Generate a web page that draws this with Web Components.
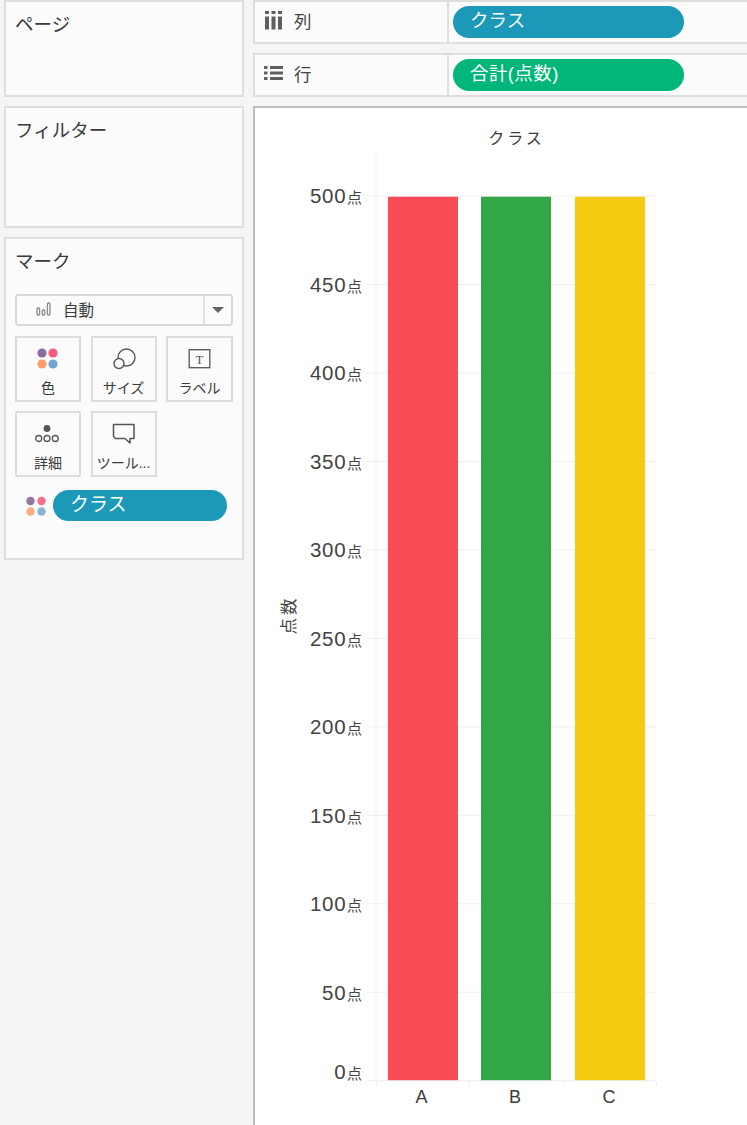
<!DOCTYPE html>
<html lang="ja">
<head>
<meta charset="utf-8">
<title>Tableau</title>
<style>
html,body{margin:0;padding:0;height:100%;overflow:hidden}
body{background:#f5f5f5;font-family:"Liberation Sans","Noto Sans CJK JP",sans-serif;color:#333}
</style>
</head>
<body>
<tab-workspace>
  <div slot="left">
    <side-panel label="ページ" h="97"></side-panel>
    <side-panel label="フィルター" h="122"></side-panel>
    <side-panel label="マーク" h="323">
      <mark-select>自動</mark-select>
      <mark-grid>
        <mark-button label="色"><svg width="24" height="24" viewBox="0 0 24 24"><circle cx="6" cy="6" r="4.6" fill="#8a6d9f"/><circle cx="17" cy="6" r="4.6" fill="#f8597c"/><circle cx="6" cy="17" r="4.6" fill="#fb9e6a"/><circle cx="17" cy="17" r="4.6" fill="#76a4d2"/></svg></mark-button>
        <mark-button label="サイズ"><svg width="24" height="24" viewBox="0 0 24 24" fill="none" stroke="#555" stroke-width="1.4"><circle cx="14.5" cy="10.5" r="8.5"/><circle cx="7" cy="16.5" r="5" fill="#fbfbfb"/></svg></mark-button>
        <mark-button label="ラベル"><svg width="24" height="24" viewBox="0 0 24 24" fill="none"><rect x="1.2" y="2.7" width="20.6" height="18" stroke="#555" stroke-width="1.3"/><text x="11.5" y="16.5" font-size="13" font-family="Liberation Serif" fill="#555" text-anchor="middle" stroke="none">T</text></svg></mark-button>
        <mark-button label="詳細"><svg width="26" height="24" viewBox="0 0 26 24" fill="none" stroke="#555" stroke-width="1.3"><circle cx="12" cy="6.5" r="3.4" fill="#555" stroke="none"/><circle cx="3.7" cy="16.5" r="3"/><circle cx="12" cy="16.5" r="3"/><circle cx="20.3" cy="16.5" r="3"/></svg></mark-button>
        <mark-button label="ツール..."><svg width="24" height="24" viewBox="0 0 24 24" fill="none" stroke="#555" stroke-width="1.5" stroke-linejoin="round"><path d="M1.5 2.5H22V16.5H18V21L13 16.5H3.5L1.5 14.5Z"/></svg></mark-button>
      </mark-grid>
      <mark-field>クラス</mark-field>
    </side-panel>
  </div>
  <div slot="right">
    <shelf-row label="列" icon="cols"><field-pill color="#1c98b8">クラス</field-pill></shelf-row>
    <shelf-row label="行" icon="rows"><field-pill color="#00b67a" style="letter-spacing:.4px">合計(点数)</field-pill></shelf-row>
    <bar-view></bar-view>
  </div>
</tab-workspace>
<script>
function def(name, css, html, init){
  customElements.define(name, class extends HTMLElement{
    constructor(){
      super();
      const r=this.attachShadow({mode:"open"});
      r.innerHTML="<style>"+css+"</style>"+html;
    }
    connectedCallback(){ if(init) init(this,this.shadowRoot); }
  });
}
def("tab-workspace",
 ":host{display:grid;grid-template-columns:240px 494px;column-gap:9px;padding-left:4px;height:1125px;overflow:hidden}"+
 "::slotted(div){display:flex;flex-direction:column;gap:9px;min-width:0}",
 "<slot name='left'></slot><slot name='right'></slot>");
def("side-panel",
 ":host{display:block;box-sizing:border-box;background:#fbfbfb;border:2px solid #dedede;padding:10px 9px 0 9px}"+
 ".t{font-size:18.5px;line-height:25px;color:#3a3a3a}.b{display:block}",
 "<div class='t'></div><div class='b'><slot></slot></div>",
 (h,r)=>{r.querySelector(".t").textContent=h.getAttribute("label");h.style.height=h.getAttribute("h")+"px";});
def("mark-select",
 ":host{display:flex;box-sizing:border-box;margin-top:20px;height:32px;width:218px;border:2px solid #d8d8d8;border-radius:3px;background:#fbfbfb;align-items:center;font-size:15.5px;color:#3a3a3a}"+
 ".m{flex:1;display:flex;align-items:center;gap:12px;padding:0 0 3px 19px}"+
 ".a{width:28px;align-self:stretch;border-left:2px solid #e2e2e2;display:flex;align-items:center;justify-content:center;box-sizing:border-box}"+
 ".a i{width:0;height:0;border-left:6px solid transparent;border-right:6px solid transparent;border-top:6.5px solid #666}",
 "<div class='m'><svg width='15' height='14' viewBox='0 0 15 14' fill='none' stroke='#8a8a8a' stroke-width='1.3'><rect x='1' y='6' width='2.6' height='7' rx='1'/><rect x='6.2' y='8' width='2.6' height='5' rx='1'/><rect x='11.4' y='1' width='2.6' height='12' rx='1'/></svg><span><slot></slot></span></div><div class='a'><i></i></div>");
def("mark-grid",
 ":host{display:grid;grid-template-columns:66px 66px 67px;grid-auto-rows:66px;column-gap:9.5px;row-gap:9px;margin-top:10px;width:218px}",
 "<slot></slot>");
def("mark-button",
 ":host{display:flex;flex-direction:column;align-items:center;box-sizing:border-box;border:2px solid #dcdcdc;font-size:14px;color:#3a3a3a;padding-top:9px;background:#fbfbfb}"+
 ".i{height:24px;display:flex;align-items:center;justify-content:center}.l{margin-top:7px;line-height:20px;white-space:nowrap}svg,::slotted(svg){display:block}",
 "<div class='i'><slot></slot></div><div class='l'></div>",
 (h,r)=>{r.querySelector(".l").textContent=h.getAttribute("label");});
def("mark-field",
 ":host{display:flex;align-items:center;gap:6px;margin-top:13px;margin-left:10px;width:202px}"+
 "svg{display:block;flex:none}.p{flex:1;height:31px;border-radius:16px;background:#1c98b8;color:#fff;font-size:19px;line-height:29px;padding-left:17px;box-sizing:border-box}",
 "<svg width='22' height='22' viewBox='0 0 22 22'><circle cx='5.5' cy='6' r='4.2' fill='#93739f'/><circle cx='16.5' cy='6' r='4.2' fill='#fb6d89'/><circle cx='5.5' cy='16.5' r='4.2' fill='#fdab7f'/><circle cx='16.5' cy='16.5' r='4.2' fill='#8cb0d6'/></svg><div class='p'><slot></slot></div>");
def("shelf-row",
 ":host{display:flex;box-sizing:border-box;height:44px;border:2px solid #dedede;border-right:0;background:#fbfbfb;width:494px}"+
 ".h{width:194px;box-sizing:border-box;flex:none;border-right:2px solid #dedede;display:flex;align-items:center;padding:0 0 4px 9px;gap:11px;font-size:17.5px;color:#444}"+
 "svg{display:block}.c{flex:1;padding:4px 0 0 4px}",
 "<div class='h'><span class='ic'></span><span class='n'></span></div><div class='c'><slot></slot></div>",
 (h,r)=>{
  r.querySelector(".n").textContent=h.getAttribute("label");
  r.querySelector(".ic").innerHTML=h.getAttribute("icon")==="cols"
   ?"<svg width='19' height='20' viewBox='0 0 19 20' fill='#5f5f5f'><rect x='1' y='1' width='4' height='3'/><rect x='1' y='6.5' width='4' height='13'/><rect x='7.5' y='1' width='4' height='3'/><rect x='7.5' y='6.5' width='4' height='13'/><rect x='14' y='1' width='4' height='3'/><rect x='14' y='6.5' width='4' height='13'/></svg>"
   :"<svg width='19' height='16' viewBox='0 0 19 16' fill='#5f5f5f'><rect x='0' y='1' width='3.5' height='3'/><rect x='6' y='1' width='13' height='3'/><rect x='0' y='6.5' width='3.5' height='3'/><rect x='6' y='6.5' width='13' height='3'/><rect x='0' y='12' width='3.5' height='3'/><rect x='6' y='12' width='13' height='3'/></svg>";
 });
def("field-pill",
 ":host{display:block;box-sizing:border-box;width:231px;height:32px;border-radius:16px;color:#fff;font-size:18.5px;line-height:29px;padding-left:17px}",
 "<slot></slot>",
 (h)=>{h.style.background=h.getAttribute("color");});
def("bar-view",
 ":host{display:block;box-sizing:border-box;flex:1;background:#fff;border:2px solid #bdbdbd;border-right:0;border-bottom:0;min-height:0;overflow:hidden}svg{display:block}",
 "<svg id='s' width='492' height='1017' viewBox='255 108 492 1017' xmlns='http://www.w3.org/2000/svg'></svg>",
 (h,r)=>{
  const y0=1080.7,st=88.46,F='font-family="Liberation Sans,Noto Sans CJK JP,sans-serif"';
  let s='<path d="M376 153V1081" stroke="#f1f1f1" fill="none"/>';
  for(let i=0;i<=10;i++){
    const y=y0-i*st;
    s+=`<path d="M367 ${y.toFixed(1)}H656" stroke="#eeeeee" fill="none"/>`;
  }
  [["#f94c56",388],["#31a745",481],["#f5cb11",575]].forEach(([c,x])=>{
    s+=`<rect x="${x}" y="196.7" width="70" height="883.5" fill="${c}"/>`;
  });
  [376,469,563,656].forEach(x=>{s+=`<path d="M${x}.5 1081V1086" stroke="#eeeeee" fill="none"/>`;});
  for(let i=0;i<=10;i++){
    const y=i===0?1079:y0-i*st+7.3, v=i*50;
    s+=`<text x="362" y="${y.toFixed(1)}" text-anchor="end" ${F} font-size="20.5" letter-spacing="0.8" fill="#444" >${v}<tspan font-size="15" dx="0.5" letter-spacing="0">点</tspan></text>`;
  }
  s+=`<text x="516.5" y="143.5" text-anchor="middle" ${F} font-size="16" letter-spacing="3" fill="#3c3c3c">クラス</text>`;
  s+=`<text transform="translate(295 615) rotate(-90)" text-anchor="middle" ${F} font-size="16.5" letter-spacing="3" fill="#444">点数</text>`;
  [["A",421.5],["B",515],["C",609]].forEach(([t,x])=>{
    s+=`<text x="${x}" y="1103" text-anchor="middle" ${F} font-size="18" fill="#3c3c3c">${t}</text>`;
  });
  r.getElementById("s").innerHTML=s;
 });
</script>
</body>
</html>
